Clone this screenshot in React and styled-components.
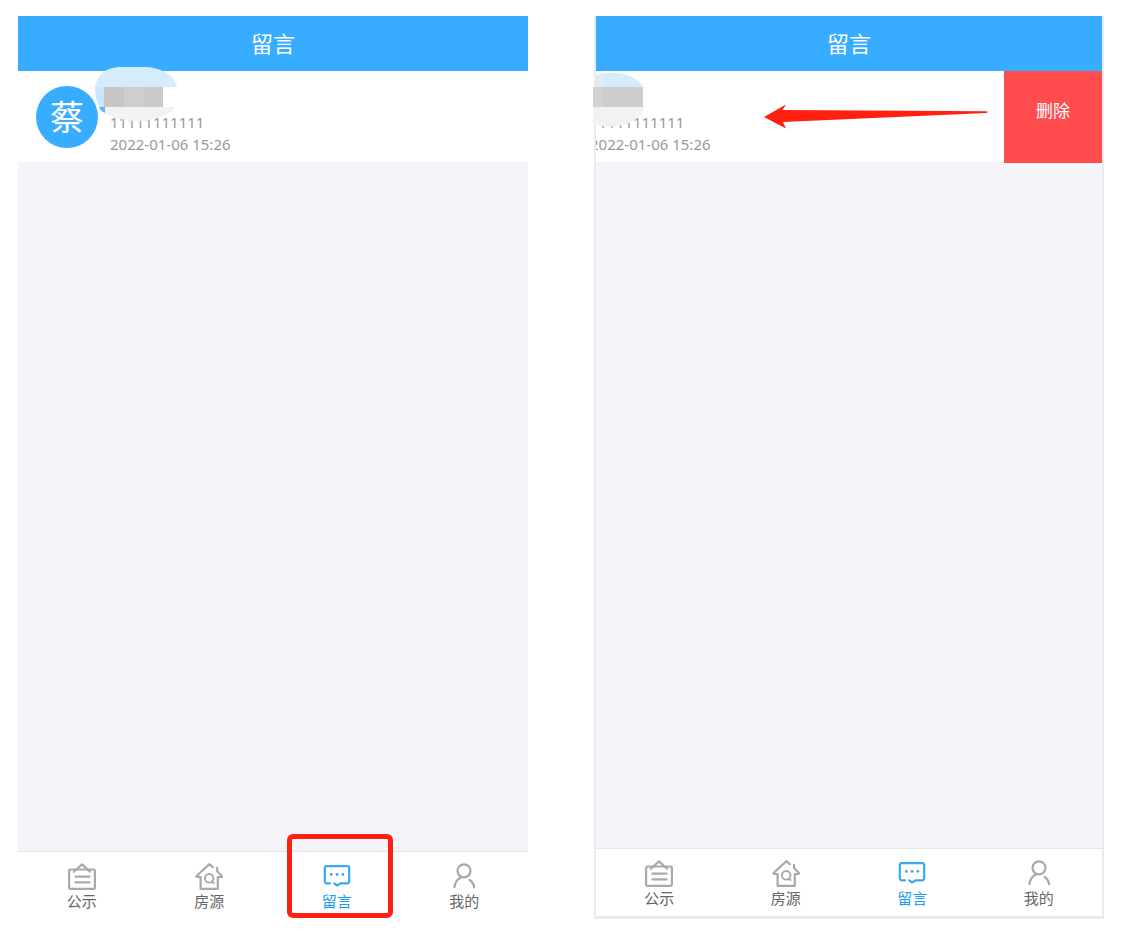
import React from 'react'
import styled, { createGlobalStyle, css } from 'styled-components'

const GlobalStyle = createGlobalStyle`
  * {
    box-sizing: border-box;
  }
  body {
    margin: 0;
    background: #fff;
    font-family: 'Noto Sans', 'Noto Sans CJK SC', sans-serif;
  }
`

const Page = styled.main`
  display: grid;
  grid-template-columns: 1fr 1fr;
  gap: 66px;
  min-height: 100vh;
  padding: 16px 21px 12px 18px;
`

const Phone = styled.section`
  display: flex;
  flex-direction: column;
  min-width: 0;
  background: #f4f4f9;
  ${p => p.$framed && css`
    border: solid #ebebef;
    border-width: 0 2px 3px;
  `}
`

const Header = styled.header`
  background: #38adff;
  color: #fff;
  text-align: center;
`

const Title = styled.h1`
  margin: 0;
  font-size: 22px;
  font-weight: 400;
  line-height: 55px;
`

const Row = styled.div`
  position: relative;
`

const Track = styled.div`
  display: flex;
  align-items: flex-start;
  overflow: hidden;
`

const Message = styled.div`
  display: flex;
  flex: 0 0 100%;
  gap: 12px;
  height: 91px;
  padding: 15px 18px 0;
  background: #fff;
  margin-left: ${p => (p.$open ? '-98px' : '0')};
`

const Avatar = styled.div`
  flex: none;
  width: 62px;
  height: 62px;
  border-radius: 50%;
  background: #38adff;
  color: #fff;
  font-size: 34px;
  line-height: 62px;
  text-align: center;
`

const Info = styled.div`
  padding-top: 25px;
  color: #999;
  font-size: 15px;
  line-height: 22px;
  white-space: nowrap;
`

const Line = styled.div``

const Remove = styled.button`
  flex: 0 0 98px;
  height: 92px;
  padding: 0 0 16px;
  border: 0;
  background: #ff4d4f;
  color: #fff;
  font-family: inherit;
  font-size: 17px;
`

const Mosaic = styled.svg`
  position: absolute;
  left: ${p => p.$left}px;
  top: -4px;
`

const Arrow = styled.svg`
  position: absolute;
  right: 114px;
  top: 32px;
`

const TabBar = styled.nav`
  display: grid;
  grid-template-columns: repeat(4, 1fr);
  height: 68px;
  margin-top: auto;
  border-top: 1px solid #e6e6ea;
  background: #fff;
`

const Tab = styled.a`
  position: relative;
  display: flex;
  flex-direction: column;
  align-items: center;
  padding-top: 10px;
  color: ${p => (p.$active ? '#1e9bf5' : '#666')};
  font-size: 15px;
  line-height: 22px;
  text-decoration: none;
  svg {
    stroke: ${p => (p.$active ? '#38a9f8' : '#a9a9a9')};
  }
`

const Highlight = styled.span`
  position: absolute;
  inset: -18px 8px 1px 14px;
  border: 5px solid #ff2014;
  border-radius: 6px;
`

const Icon = ({ children }) =>
  <svg
    width="28"
    height="28"
    viewBox="0 0 28 28"
    fill="none"
    strokeWidth="2.2"
    strokeLinecap="round"
    strokeLinejoin="round"
    aria-hidden="true"
  >
    {children}
  </svg>

const NoticeIcon = () =>
  <Icon>
    <rect x="1.1" y="7.5" width="25.8" height="19.3" rx="1.5" />
    <path d="M5.8 9.8 14 2.4l8.2 7.4M7.5 14.7h14M7.5 20.4h14" />
  </Icon>

const HouseIcon = () =>
  <Icon>
    <path d="M17.8 5.2 14.3 2.2 1.8 13.8c-.4.5-.2 1 .4 1.2H5.6v11.8h17.2V15h3.5c.6-.2.8-.7.4-1.2l-4.6-4.5V5.8" />
    <circle cx="14.2" cy="16.3" r="4.3" strokeWidth="1.9" />
    <path d="m16.8 19.7 1.8 1.4" strokeWidth="1.9" />
  </Icon>

const ChatIcon = () =>
  <Icon>
    <path d="M7 21.3H3.6a1.8 1.8 0 0 1-1.8-1.8V6a1.8 1.8 0 0 1 1.8-1.8h20.8A1.8 1.8 0 0 1 26.2 6v13.5a1.8 1.8 0 0 1-1.8 1.8H17.4l-3.2 2.2-3-2.2" />
    <path d="M8.2 12.4h.1M14 12.4h.1M19.8 12.4h.1" strokeWidth="2.8" />
  </Icon>

const UserIcon = () =>
  <Icon>
    <circle cx="14" cy="8.8" r="6.5" />
    <path d="M11.4 15.2c-3.9 1.6-6.4 5-7 10M19.6 17.8c2.5 1.8 4 4 4.6 7.4" />
  </Icon>

const tabs = [
  { label: '公示', icon: NoticeIcon },
  { label: '房源', icon: HouseIcon },
  { label: '留言', icon: ChatIcon, active: true },
  { label: '我的', icon: UserIcon }
]

const Tabs = ({ highlight }) =>
  <TabBar>
    {tabs.map(({ label, icon: TabIcon, active }) =>
      <Tab key={label} href="#" $active={active}>
        <TabIcon />
        {label}
        {active && highlight && <Highlight />}
      </Tab>
    )}
  </TabBar>

const MessageBody = ({ open }) =>
  <Message $open={open}>
    <Avatar>蔡</Avatar>
    <Info>
      <Line>11111111111</Line>
      <Line>2022-01-06 15:26</Line>
    </Info>
  </Message>

const App = () =>
  <>
    <GlobalStyle />
    <Page>
      <Phone>
        <Header>
          <Title>留言</Title>
        </Header>
        <Row>
          <Track>
            <MessageBody />
          </Track>
          <Mosaic $left={77} width="84" height="56" aria-hidden="true">
            <path d="M0 20C2 8 10 1 24 0h24c18 0 31 8 34 20z" fill="#d5ecfd" />
            <path d="M0 20h10v20H5C1 34 0 28 0 20z" fill="#c8e7fd" />
            <path d="M4 40h6v6C7 45 5 43 4 40z" fill="#5cb9fb" />
            <path d="M10 40h70c-3 5-9 8-17 11-15 5-38 4-53-5z" fill="#f2f2f2" />
            <path d="M9 20h20v20H9z" fill="#c6c6c7" />
            <path d="M29 20h20v20H29z" fill="#cecece" />
            <path d="M49 20h19v20H49z" fill="#cacacb" />
          </Mosaic>
        </Row>
        <Tabs highlight />
      </Phone>
      <Phone $framed>
        <Header>
          <Title>留言</Title>
        </Header>
        <Row>
          <Track>
            <MessageBody open />
            <Remove type="button">删除</Remove>
          </Track>
          <Mosaic $left={-3} width="54" height="62" aria-hidden="true">
            <path d="M3 8C20 3 43 6 50 20H3z" fill="#d5ecfd" />
            <path d="M3 8c3-1 5-1 7-2v14H3z" fill="#e2ecf3" />
            <path d="M0 39h52c-2 8-7 13-16 17-12 5-25 5-36 0z" fill="#f2f2f2" />
            <path d="M0 20h50v20H0z" fill="#cdcdcd" />
            <path d="M0 20h10v20H0z" fill="#d2d2d3" />
          </Mosaic>
          <Arrow width="224" height="28" viewBox="0 0 224 28" aria-hidden="true">
            <path d="M0 14 22 1.5 18.5 7l204 1.2q2 .7 0 1.8L19 19l3 6.5z" fill="#ff2010" />
          </Arrow>
        </Row>
        <Tabs />
      </Phone>
    </Page>
  </>

export default App
